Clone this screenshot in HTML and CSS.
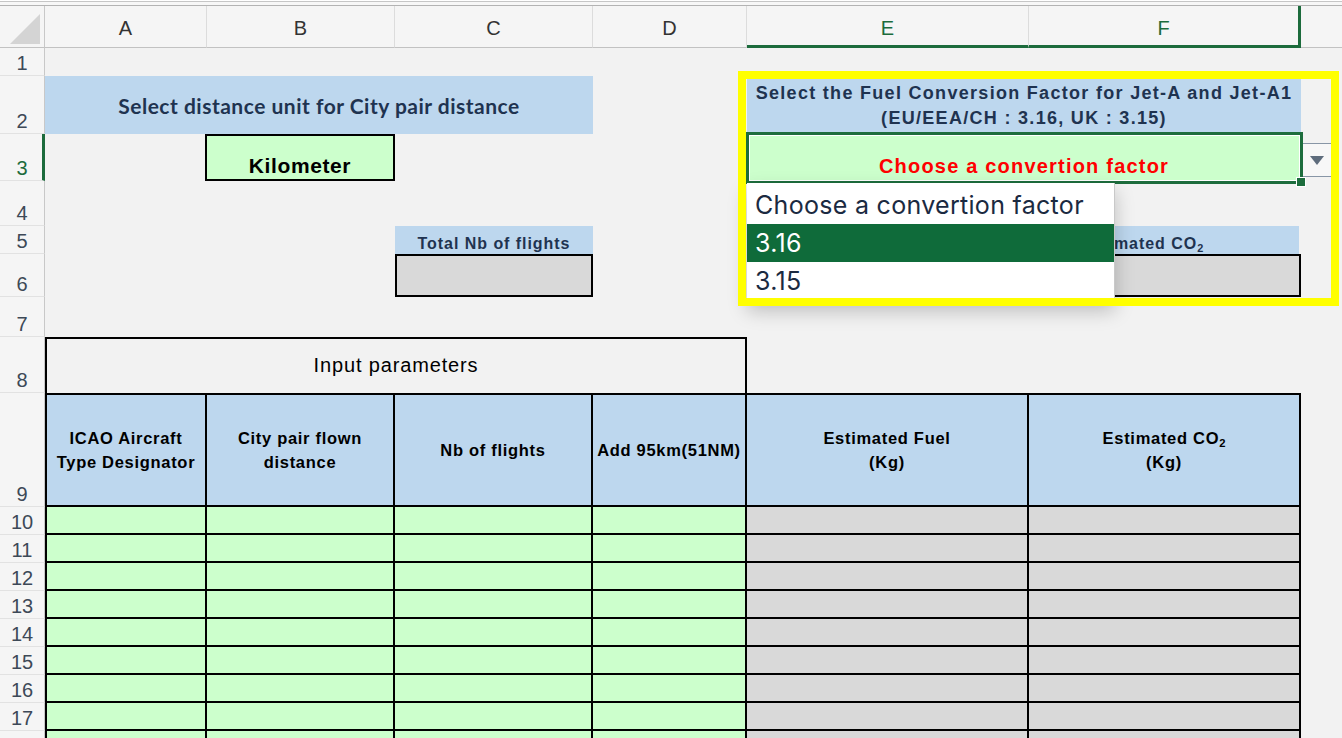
FILE: index.html
```html
<!DOCTYPE html>
<html>
<head>
<meta charset="utf-8">
<title>Fuel and CO2 estimator</title>
<link rel="stylesheet" href="styles.css">
</head>
<body>
<div class="app">
  <div class="topbar"></div>
  <div class="colheads">
    <div class="corner"><span class="tri"></span></div>
    <div class="ch">A</div>
    <div class="ch">B</div>
    <div class="ch">C</div>
    <div class="ch">D</div>
    <div class="ch sel">E</div>
    <div class="ch sel last">F</div>
    <div class="ch blank"></div>
  </div>
  <div class="body">
    <div class="rowheads">
      <div class="rh h28">1</div>
      <div class="rh h58">2</div>
      <div class="rh h47 sel">3</div>
      <div class="rh h45">4</div>
      <div class="rh h28">5</div>
      <div class="rh h43">6</div>
      <div class="rh h40">7</div>
      <div class="rh h56">8</div>
      <div class="rh h114">9</div>
      <div class="rh h28">10</div>
      <div class="rh h28">11</div>
      <div class="rh h28">12</div>
      <div class="rh h28">13</div>
      <div class="rh h28">14</div>
      <div class="rh h28">15</div>
      <div class="rh h28">16</div>
      <div class="rh h28">17</div>
      <div class="rh h28"></div>
    </div>
    <div class="grid">
      <div class="t-dist"><span>Select distance unit for City pair distance</span></div>
      <div class="t-fuel"><span>Select the Fuel Conversion Factor for Jet-A and Jet-A1<br>(EU/EEA/CH : 3.16, UK : 3.15)</span></div>
      <div class="km"><span>Kilometer</span></div>
      <div class="conv">
        <span class="conv-text">Choose a convertion factor</span>
        <span class="handle"></span>
        <span class="dd-btn"><svg width="14" height="9" viewBox="0 0 14 9"><path d="M0 0H14L7 9Z" fill="#5e6c7c"/></svg></span>
        <div class="dd-list">
          <div class="dd-item">Choose a convertion factor</div>
          <div class="dd-item active">3.16</div>
          <div class="dd-item">3.15</div>
        </div>
      </div>
      <div class="nb-h"><span>Total Nb of flights</span></div>
      <div class="co2-h"><span>Estimated CO<sub>2</sub></span></div>
      <div class="nb-v"></div>
      <div class="co2-v"></div>
      <div class="inp"><span>Input parameters</span></div>
      <div class="table">
        <div class="td th"><span>ICAO Aircraft<br>Type Designator</span></div>
        <div class="td th"><span>City pair flown<br>distance</span></div>
        <div class="td th"><span>Nb of flights</span></div>
        <div class="td th"><span>Add 95km(51NM)</span></div>
        <div class="td th"><span>Estimated Fuel<br>(Kg)</span></div>
        <div class="td th"><span>Estimated CO<sub>2</sub><br>(Kg)</span></div>

        <div class="td g"></div><div class="td g"></div><div class="td g"></div><div class="td g"></div><div class="td x"></div><div class="td x"></div>
        <div class="td g"></div><div class="td g"></div><div class="td g"></div><div class="td g"></div><div class="td x"></div><div class="td x"></div>
        <div class="td g"></div><div class="td g"></div><div class="td g"></div><div class="td g"></div><div class="td x"></div><div class="td x"></div>
        <div class="td g"></div><div class="td g"></div><div class="td g"></div><div class="td g"></div><div class="td x"></div><div class="td x"></div>
        <div class="td g"></div><div class="td g"></div><div class="td g"></div><div class="td g"></div><div class="td x"></div><div class="td x"></div>
        <div class="td g"></div><div class="td g"></div><div class="td g"></div><div class="td g"></div><div class="td x"></div><div class="td x"></div>
        <div class="td g"></div><div class="td g"></div><div class="td g"></div><div class="td g"></div><div class="td x"></div><div class="td x"></div>
        <div class="td g"></div><div class="td g"></div><div class="td g"></div><div class="td g"></div><div class="td x"></div><div class="td x"></div>
        <div class="td g"></div><div class="td g"></div><div class="td g"></div><div class="td g"></div><div class="td x"></div><div class="td x"></div>
      </div>
    </div>
  </div>
  <div class="yellow"></div>
</div>
</body>
</html>
```
FILE: styles.css
```css
* { box-sizing: border-box; }
html, body { margin: 0; padding: 0; }
body {
  background: #f2f2f2;
  font-family: "Liberation Sans", Arial, sans-serif;
  overflow: hidden;
}
.app {
  position: relative;
  width: 1342px;
  height: 738px;
  overflow: hidden;
  background: #f2f2f2;
}
.topbar {
  height: 6px;
  background: linear-gradient(#ffffff 0 1px, #c6c6c6 1px 2px, #f7f7f7 2px 5px, #b3b3b3 5px 6px);
}
.colheads {
  display: grid;
  grid-template-columns: 45px 162px 188px 198px 154px 282px 272px 1fr;
  height: 42px;
}
.corner {
  position: relative;
  background: #f5f5f5;
  border-right: 1px solid #c8c8c8;
  border-bottom: 1px solid #c2c2c2;
}
.tri {
  position: absolute;
  left: 10px;
  top: 8px;
  width: 30px;
  height: 30px;
  background: #d4d4d4;
  clip-path: polygon(100% 0, 100% 100%, 0 100%);
}
.ch {
  background: #f5f5f5;
  border-right: 1px solid #dcdcdc;
  border-bottom: 1px solid #c2c2c2;
  display: flex;
  align-items: center;
  justify-content: center;
  font-size: 20px;
  color: #333;
  padding-top: 3px;
}
.ch.sel {
  color: #1c6b3c;
  border-bottom: 3px solid #1c6b3c;
  padding-top: 5px;
}
.ch.last { border-right: 3px solid #1c6b3c; }
.ch.blank { border-right: none; }

.body { display: flex; }
.rowheads {
  width: 45px;
  flex: none;
  display: flex;
  flex-direction: column;
}
.rh {
  background: #f5f5f5;
  border-right: 1px solid #c8c8c8;
  border-bottom: 1px solid #e2e2e2;
  display: flex;
  align-items: flex-end;
  justify-content: center;
  font-size: 20px;
  line-height: 22px;
  padding-bottom: 1px;
  color: #3d4957;
}
.rh.sel {
  color: #1c6b3c;
  border-right: 3px solid #1c6b3c;
  padding-left: 2px;
}
.h28 { height: 28px; }
.h58 { height: 58px; }
.h47 { height: 47px; }
.h45 { height: 45px; }
.h43 { height: 43px; }
.h40 { height: 40px; }
.h56 { height: 56px; }
.h114 { height: 114px; }

.grid {
  flex: 1;
  display: grid;
  grid-template-columns: 162px 188px 198px 154px 282px 272px 1fr;
  grid-template-rows: 28px 58px 47px 45px 28px 43px 40px 56px auto;
}
.t-dist {
  grid-row: 2;
  grid-column: 1 / 4;
  background: #bdd7ee;
  display: flex;
  align-items: center;
  justify-content: center;
  font-family: Lato, "Liberation Sans", sans-serif;
  font-weight: 700;
  font-size: 21px;
  letter-spacing: 0.5px;
  color: #1f3350;
  padding-top: 1px;
}
.t-fuel {
  grid-row: 2;
  grid-column: 5 / 7;
  background: #bdd7ee;
  display: flex;
  align-items: center;
  justify-content: center;
  text-align: center;
  font-weight: 700;
  font-size: 18px;
  line-height: 25px;
  letter-spacing: 1.3px;
  color: #1f3350;
  padding-top: 2px;
}
.km {
  grid-row: 3;
  grid-column: 2;
  margin-left: -2px;
  border: 2px solid #000;
  background: #ccffcc;
  display: flex;
  align-items: flex-end;
  justify-content: center;
  font-weight: 700;
  font-size: 21px;
  line-height: 23px;
  letter-spacing: 0.6px;
  padding-bottom: 2px;
  color: #000;
}
.conv {
  grid-row: 3;
  grid-column: 5 / 7;
  position: relative;
  background: #ccffcc;
  display: flex;
  align-items: flex-end;
  justify-content: center;
  font-weight: 700;
  font-size: 20px;
  line-height: 23px;
  letter-spacing: 1.2px;
  padding-bottom: 3px;
  color: #ff0000;
}
.conv::after {
  content: "";
  position: absolute;
  left: -1px;
  right: -2px;
  top: -2px;
  bottom: -3px;
  border: 3px solid #1d6d3d;
  box-shadow: inset 0 0 0 1px #ffffff;
  pointer-events: none;
}
.handle {
  position: absolute;
  right: -5px;
  bottom: -6px;
  width: 10px;
  height: 10px;
  background: #1d6d3d;
  border: 1px solid #ffffff;
  z-index: 2;
}
.dd-btn {
  position: absolute;
  left: calc(100% + 1px);
  top: 9px;
  width: 29px;
  height: 34px;
  background: #f7f7f7;
  border-top: 1px solid #8896a6;
  border-bottom: 1px solid #8896a6;
  border-left: 1px solid #2c3c52;
  display: flex;
  align-items: center;
  justify-content: center;
}
.dd-list {
  position: absolute;
  left: 0;
  top: calc(100% + 2px);
  width: 368px;
  padding: 3px 0;
  background: #ffffff;
  border-right: 1px solid #c9c9c9;
  box-shadow: 0 8px 18px rgba(0, 0, 0, 0.22);
  z-index: 3;
}
.dd-item {
  height: 38px;
  padding-left: 8px;
  display: flex;
  align-items: center;
  font-family: Inter, "Liberation Sans", sans-serif;
  font-weight: 400;
  font-size: 25px;
  letter-spacing: 0.3px;
  color: #1b2a41;
}
.dd-item.active {
  background: #0f6b3a;
  color: #ffffff;
}
.nb-h, .co2-h {
  grid-row: 5;
  background: #bdd7ee;
  display: flex;
  align-items: flex-end;
  justify-content: center;
  font-weight: 700;
  font-size: 16px;
  line-height: 19px;
  letter-spacing: 0.95px;
  color: #1f3350;
  padding-bottom: 1px;
}
.nb-h { grid-column: 3; }
.co2-h { grid-column: 6; padding-right: 44px; margin-right: 2px; }
.nb-v, .co2-v {
  grid-row: 6;
  background: #d9d9d9;
  border: 2px solid #000;
}
.nb-v { grid-column: 3; }
.co2-v { grid-column: 6; }
sub {
  font-size: 0.68em;
  vertical-align: -0.25em;
  line-height: 0;
  letter-spacing: 0;
}
.inp {
  grid-row: 8;
  grid-column: 1 / 5;
  border: 2px solid #000;
  border-bottom: none;
  display: flex;
  align-items: center;
  justify-content: center;
  font-size: 20px;
  letter-spacing: 0.85px;
  color: #000;
  padding-bottom: 2px;
}
.table {
  grid-row: 9;
  grid-column: 1 / 7;
  display: grid;
  grid-template-columns: 162px 188px 198px 154px 282px 272px;
  grid-template-rows: 114px repeat(9, 28px);
}
.td {
  border-right: 2px solid #000;
  border-bottom: 2px solid #000;
}
.td:nth-child(6n+1) { border-left: 2px solid #000; }
.th {
  border-top: 2px solid #000;
  background: #bdd7ee;
  display: flex;
  align-items: center;
  justify-content: center;
  text-align: center;
  font-weight: 700;
  font-size: 16.5px;
  line-height: 24px;
  letter-spacing: 0.7px;
  color: #000;
}
.g { background: #ccffcc; }
.x { background: #d9d9d9; }
.yellow {
  position: absolute;
  left: 738px;
  top: 71px;
  width: 601px;
  height: 235px;
  border: 8px solid #ffff00;
  z-index: 10;
  pointer-events: none;
}
```
